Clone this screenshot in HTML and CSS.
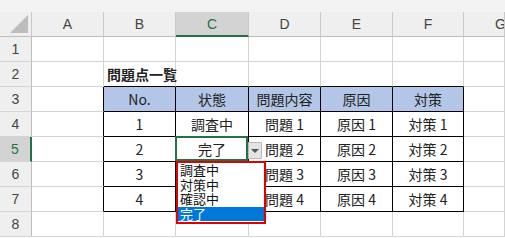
FILE: index.html
```html
<!DOCTYPE html>
<html lang="ja">
<head>
  <meta charset="UTF-8" />
  <title>問題点一覧</title>
  <link rel="stylesheet" href="styles.css">
</head>
<body>
  <div class="sheet">
    <div class="strip"></div>

    <div class="row head">
      <div class="corner"><span class="tri"></span></div>
      <div class="ch">A</div>
      <div class="ch">B</div>
      <div class="ch sel">C</div>
      <div class="ch">D</div>
      <div class="ch">E</div>
      <div class="ch">F</div>
      <div class="ch last">G</div>
    </div>

    <div class="row">
      <div class="rh">1</div>
      <div class="c"></div><div class="c"></div><div class="c"></div><div class="c"></div>
      <div class="c"></div><div class="c"></div><div class="c"></div>
    </div>

    <div class="row">
      <div class="rh">2</div>
      <div class="c"></div>
      <div class="c tt title">問題点一覧</div>
      <div class="c tt"></div><div class="c tt"></div><div class="c tt"></div><div class="c tt"></div>
      <div class="c"></div>
    </div>

    <div class="row">
      <div class="rh">3</div>
      <div class="c tl"></div>
      <div class="c tb th">No.</div>
      <div class="c tb th">状態</div>
      <div class="c tb th">問題内容</div>
      <div class="c tb th">原因</div>
      <div class="c tb th">対策</div>
      <div class="c"></div>
    </div>

    <div class="row">
      <div class="rh">4</div>
      <div class="c tl"></div>
      <div class="c tb">1</div>
      <div class="c tb">調査中</div>
      <div class="c tb">問題 1</div>
      <div class="c tb">原因 1</div>
      <div class="c tb">対策 1</div>
      <div class="c"></div>
    </div>

    <div class="row">
      <div class="rh sel">5</div>
      <div class="c tl"></div>
      <div class="c tb">2</div>
      <div class="c tb active">完了
        <div class="dd-btn"><span class="arrow"></span></div>
        <ul class="dd-list">
          <li>調査中</li>
          <li>対策中</li>
          <li>確認中</li>
          <li class="picked">完了</li>
        </ul>
      </div>
      <div class="c tb">問題 2</div>
      <div class="c tb">原因 2</div>
      <div class="c tb">対策 2</div>
      <div class="c"></div>
    </div>

    <div class="row">
      <div class="rh">6</div>
      <div class="c tl"></div>
      <div class="c tb">3</div>
      <div class="c tb"></div>
      <div class="c tb">問題 3</div>
      <div class="c tb">原因 3</div>
      <div class="c tb">対策 3</div>
      <div class="c"></div>
    </div>

    <div class="row">
      <div class="rh">7</div>
      <div class="c tl"></div>
      <div class="c tb">4</div>
      <div class="c tb"></div>
      <div class="c tb">問題 4</div>
      <div class="c tb">原因 4</div>
      <div class="c tb">対策 4</div>
      <div class="c"></div>
    </div>

    <div class="row">
      <div class="rh">8</div>
      <div class="c"></div><div class="c"></div><div class="c"></div><div class="c"></div>
      <div class="c"></div><div class="c"></div><div class="c"></div>
    </div>
  </div>
</body>
</html>
```

FILE: styles.css
```css
body {
  margin: 0;
  width: 505px;
  height: 238px;
  overflow: hidden;
  background: #fff;
  font-family: 'Noto Sans CJK JP', 'Liberation Sans', sans-serif;
  color: #222;
}
.sheet {
  --cols: 32px 72px 72px 73px 72px 72px 71px 1fr;
  width: 505px;
  overflow: hidden;
}
.strip {
  height: 12px;
  background: #f3f3f3;
}
.row {
  display: grid;
  grid-template-columns: var(--cols);
  height: 25px;
}
.row > div {
  box-sizing: border-box;
  display: flex;
  align-items: center;
  justify-content: center;
  font-size: 14px;
  white-space: nowrap;
}
.c {
  border-right: 1px solid #d4d4d4;
  border-bottom: 1px solid #d4d4d4;
}

/* headers */
.head .ch,
.corner {
  background: #efefef;
  border-right: 1px solid #cacaca;
  border-bottom: 1px solid #bdbdbd;
  font-family: 'Liberation Sans', sans-serif;
  font-size: 14px;
  color: #444;
}
.head .ch.last {
  justify-content: flex-start;
  padding-left: 31px;
  overflow: hidden;
}
.corner {
  position: relative;
}
.tri {
  position: absolute;
  right: 3px;
  bottom: 3px;
  width: 0;
  height: 0;
  border-left: 18px solid transparent;
  border-bottom: 18px solid #bdbdbd;
}
.head .ch.sel {
  background: #d3d3d3;
  border-bottom: 2px solid #217346;
  color: #217346;
}
.rh {
  background: #efefef;
  border-right: 1px solid #bdbdbd;
  border-bottom: 1px solid #d4d4d4;
  font-family: 'Liberation Sans', sans-serif;
  color: #444;
}
.rh.sel {
  background: #d3d3d3;
  border-right: 2px solid #217346;
  color: #217346;
}

/* table borders */
.tt { border-bottom-color: #000; }
.tl { border-right-color: #000; }
.tb {
  border-right-color: #000;
  border-bottom-color: #000;
}
.th { background: #b4c6e7; }
.row > .title {
  justify-content: flex-start;
  padding-left: 3px;
  font-weight: bold;
  overflow: visible;
}

/* active cell + list validation dropdown */
.active {
  position: relative;
}
.active::after {
  content: '';
  position: absolute;
  top: -1px;
  left: -1px;
  right: 0;
  bottom: 0;
  border: 2px solid #217346;
}
.dd-btn {
  position: absolute;
  left: 100%;
  top: 5px;
  width: 14px;
  height: 17px;
  box-sizing: border-box;
  background: #e4e4e4;
  border: 1px solid #b9b9b9;
  display: flex;
  align-items: center;
  justify-content: center;
  z-index: 2;
}
.arrow {
  width: 0;
  height: 0;
  border-left: 4px solid transparent;
  border-right: 4px solid transparent;
  border-top: 4px solid #555;
}
.dd-list {
  position: absolute;
  top: 24px;
  left: 0;
  width: 90px;
  height: 63px;
  box-sizing: border-box;
  margin: 0;
  padding: 0;
  list-style: none;
  background: #fff;
  border: 2px solid #e00000;
  z-index: 3;
}
.dd-list li {
  height: 14.5px;
  line-height: 14.5px;
  padding-left: 2px;
  font-size: 13px;
  color: #111;
  text-align: left;
}
.dd-list li.picked {
  background: #0078d7;
  color: #fff;
}
```
